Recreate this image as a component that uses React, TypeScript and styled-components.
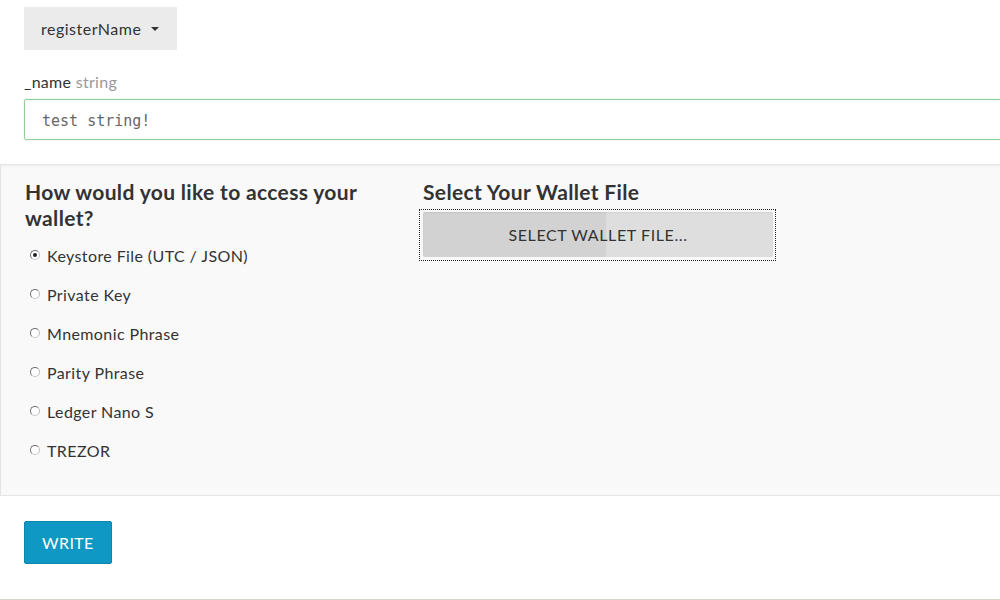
import React from 'react'
import styled, { createGlobalStyle } from 'styled-components'

const GlobalStyle = createGlobalStyle`
  html, body {
    margin: 0;
    padding: 0;
    background: #fff;
    overflow: hidden;
  }
  body {
    font-family: Lato, 'Open Sans', sans-serif;
    color: #333;
  }
`

const Page = styled.div`
  width: 1000px;
  height: 600px;
  overflow: hidden;
  border-bottom: 1px solid #d8d5cd;
  box-sizing: border-box;
`

const Top = styled.div`
  padding: 7px 0 0 24px;
`

const Dropdown = styled.button`
  display: inline-flex;
  align-items: center;
  gap: 10px;
  height: 43px;
  padding: 0 18px 0 17px;
  border: 0;
  border-radius: 0;
  background: #ebebeb;
  color: #333;
  font-family: Lato, sans-serif;
  font-size: 16px;
  letter-spacing: 0.5px;
  cursor: pointer;
`

const Caret = styled.span`
  width: 0;
  height: 0;
  border-left: 4px solid transparent;
  border-right: 4px solid transparent;
  border-top: 4px solid #333;
  margin-top: 1px;
`

const Label = styled.div`
  margin-top: 22px;
  font-size: 16px;
  letter-spacing: 0.3px;
  color: #333;
  line-height: 20px;
`

const Type = styled.span`
  color: #9a9a9a;
`

const Field = styled.input`
  display: block;
  margin-top: 7px;
  width: 1000px;
  height: 41px;
  box-sizing: border-box;
  padding: 2px 17px 0;
  border: 1px solid #92cf98;
  box-shadow: 0 0 2px rgba(146, 207, 152, 0.4);
  border-radius: 2px;
  font-family: 'DejaVu Sans Mono', 'Liberation Mono', monospace;
  font-size: 15px;
  color: #666;
  background: #fff;
  outline: none;
`

const Panel = styled.div`
  margin-top: 24px;
  width: 1010px;
  height: 332px;
  box-sizing: border-box;
  background: #f9f9f9;
  border: 1px solid #e5e5e5;
  border-top-color: #e3e3e3;
  box-shadow: inset 0 2px 2px rgba(0, 0, 0, 0.03);
  display: grid;
  grid-template-columns: 398px 1fr;
  padding: 14px 0 0 24px;
`

const Column = styled.div`
  display: flex;
  flex-direction: column;
`

const Heading = styled.h3`
  margin: 0;
  font-size: 21px;
  font-weight: 700;
  letter-spacing: 0.35px;
  line-height: 26px;
  color: #333;
  width: 350px;
`

const Options = styled.div`
  display: flex;
  flex-direction: column;
  margin-top: 5px;
`

const Option = styled.label`
  display: flex;
  align-items: center;
  height: 39px;
  font-size: 16px;
  letter-spacing: 0.4px;
  color: #333;
  padding-left: 5px;
  cursor: pointer;
`

const Radio = styled.input`
  appearance: none;
  width: 10px;
  height: 10px;
  margin: 0 7px 2px 0;
  border-radius: 50%;
  border: 1px solid #6f6f6f;
  border-right-color: #bbb;
  border-bottom-color: #c4c4c4;
  background: #fff;
  position: relative;
  &:checked::after {
    content: '';
    position: absolute;
    left: 2px;
    top: 2px;
    width: 4px;
    height: 4px;
    border-radius: 50%;
    background: #222;
  }
`

const FileButtonWrap = styled.div`
  margin: 4px 0 0 -4px;
  width: 357px;
  height: 52px;
  box-sizing: border-box;
  outline: 1px dotted #222;
  outline-offset: -1px;
  padding: 3px 3px 4px 4px;
`

const FileButton = styled.button`
  width: 100%;
  height: 45px;
  border: 0;
  border-radius: 2px;
  background: linear-gradient(90deg, #d2d2d2 0, #d2d2d2 183px, #dedede 183px);
  box-shadow: inset 0 1px 2px rgba(0, 0, 0, 0.06);
  font-family: Lato, sans-serif;
  font-size: 16px;
  text-transform: uppercase;
  color: #333;
  letter-spacing: 0.6px;
  cursor: pointer;
`

const Bottom = styled.div`
  padding: 25px 0 0 24px;
`

const WriteButton = styled.button`
  height: 43px;
  padding: 0 17px;
  border: 1px solid #0e86ad;
  border-radius: 2px;
  background: #0f98c3;
  color: #fff;
  font-family: Lato, sans-serif;
  font-size: 16px;
  text-transform: uppercase;
  letter-spacing: 0.4px;
  cursor: pointer;
`

const options = [
  'Keystore File (UTC / JSON)',
  'Private Key',
  'Mnemonic Phrase',
  'Parity Phrase',
  'Ledger Nano S',
  'TREZOR',
]

export default function App() {
  return (
    <Page>
      <GlobalStyle />
      <Top>
        <Dropdown>
          registerName <Caret />
        </Dropdown>
        <Label>
          _name <Type>string</Type>
        </Label>
        <Field defaultValue="test string!" />
      </Top>

      <Panel>
        <Column>
          <Heading>How would you like to access your wallet?</Heading>
          <Options>
            {options.map((o, i) => (
              <Option key={o}>
                <Radio type="radio" name="wallet" defaultChecked={i === 0} />
                {o}
              </Option>
            ))}
          </Options>
        </Column>
        <Column>
          <Heading>Select Your Wallet File</Heading>
          <FileButtonWrap>
            <FileButton>Select Wallet File...</FileButton>
          </FileButtonWrap>
        </Column>
      </Panel>

      <Bottom>
        <WriteButton>Write</WriteButton>
      </Bottom>
    </Page>
  )
}
